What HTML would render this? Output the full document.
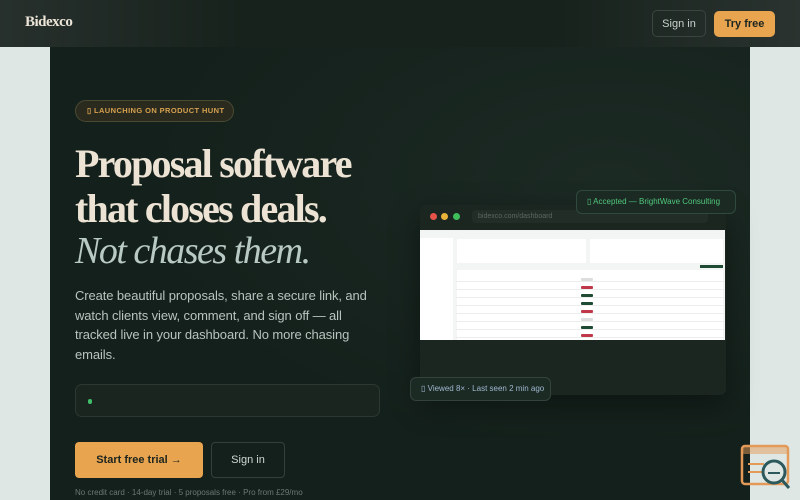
<!DOCTYPE html>
<html><head><meta charset="utf-8"><style>
*{margin:0;padding:0;box-sizing:border-box}
body{width:800px;height:500px;overflow:hidden;background:#dfe7e5;font-family:"Liberation Sans",sans-serif;position:relative}
.hdr{position:absolute;left:0;top:0;width:800px;height:47px;background:linear-gradient(90deg,#27302c,#18221d 30%,#18221d 70%,#2a332f);}
.logo{position:absolute;left:25px;top:14px;font-family:"Liberation Serif",serif;font-weight:bold;color:#ece5d8;font-size:15px;letter-spacing:-0.5px}
.hs{position:absolute;left:652px;top:10px;width:54px;height:27px;border:1px solid #3a4540;border-radius:5px;color:#c9d2cc;font-size:11px;text-align:center;line-height:26px}
.ht{position:absolute;left:714px;top:11px;width:61px;height:26px;background:#e8a44e;border-radius:5px;color:#1c2520;font-size:11px;font-weight:bold;text-align:center;line-height:26px}
.main{position:absolute;left:50px;top:47px;width:700px;height:453px;background:radial-gradient(ellipse at 80% 30%,#1c2a24,#14201b 60%)}
.pill{position:absolute;left:75px;top:100px;width:159px;height:22px;border:1px solid #4a4a32;background:#2a2a1e;border-radius:11px;color:#d6a14f;font-size:7.5px;letter-spacing:.4px;line-height:20px;padding-left:11px;font-weight:bold;white-space:nowrap}
h1{position:absolute;left:75px;top:141px;font-family:"Liberation Serif",serif;font-weight:bold;color:#ece3d4;font-size:40px;line-height:45px;letter-spacing:-1.8px}
.it{position:absolute;left:75px;top:229px;font-family:"Liberation Serif",serif;font-style:italic;color:#b9c9c4;font-size:38px;letter-spacing:-1.5px}
.p{position:absolute;left:75px;top:286px;width:300px;color:#b8c3be;font-size:13px;line-height:19.5px;letter-spacing:-0.1px}
.inp{position:absolute;left:75px;top:384px;width:305px;height:33px;border:1px solid #2c3833;background:#1a2520;border-radius:7px}
.inp i{position:absolute;left:12px;top:14px;width:4px;height:5px;background:#3fbf6a;border-radius:2px}
.b1{position:absolute;left:75px;top:442px;width:128px;height:36px;background:#e8a44e;border-radius:4px;color:#1c2520;font-size:11px;font-weight:bold;text-align:center;line-height:36px}
.b2{position:absolute;left:211px;top:442px;width:74px;height:36px;border:1px solid #34403a;border-radius:4px;color:#d0d8d3;font-size:11px;text-align:center;line-height:34px}
.note{position:absolute;left:75px;top:488px;color:#6c7872;font-size:8px}
.win{position:absolute;left:420px;top:205px;width:306px;height:190px;background:#1b2621;border-radius:6px;box-shadow:0 10px 30px rgba(0,0,0,.4)}
.dot{position:absolute;top:8px;width:7px;height:7px;border-radius:50%}
.url{position:absolute;left:52px;top:5px;width:236px;height:13px;background:#222d28;border-radius:4px;color:#5b6762;font-size:7px;padding-left:6px;line-height:13px}
.scr{position:absolute;left:0;top:25px;width:305px;height:110px;background:#f3f5f4}
.side{position:absolute;left:0;top:8px;width:33px;height:102px;background:#fff}
.card{position:absolute;background:#fff;border-radius:1px}
.row{position:absolute;left:36px;width:268px;height:1px;background:#eceeed}
.tag{position:absolute;width:12px;height:3px;border-radius:1px}
.toast{position:absolute;border:1px solid #2f4a3c;background:#1c2a24;border-radius:6px;font-size:8px;white-space:nowrap}
</style></head><body>
<div class="hdr"></div>
<div class="logo">Bidexco</div>
<div class="hs">Sign in</div>
<div class="ht">Try free</div>
<div class="main"></div>
<div class="pill">▯ LAUNCHING ON PRODUCT HUNT</div>
<h1>Proposal software<br>that closes deals.</h1>
<div class="it">Not chases them.</div>
<div class="p">Create beautiful proposals, share a secure link, and watch clients view, comment, and sign off — all tracked live in your dashboard. No more chasing emails.</div>
<div class="inp"><i></i></div>
<div class="b1">Start free trial →</div>
<div class="b2">Sign in</div>
<div class="note">No credit card · 14-day trial · 5 proposals free · Pro from £29/mo</div>
<div class="win">
<div class="dot" style="left:10px;background:#e5534b"></div>
<div class="dot" style="left:21px;background:#e8b339"></div>
<div class="dot" style="left:33px;background:#3fbf5a"></div>
<div class="url">bidexco.com/dashboard</div>
<div class="scr">
<div class="side"></div>
<div class="card" style="left:37px;top:9px;width:129px;height:24px"></div>
<div class="card" style="left:170px;top:9px;width:133px;height:24px"></div>
<div class="card" style="left:37px;top:40px;width:266px;height:70px"></div>
<div style="position:absolute;left:280px;top:35px;width:23px;height:3px;background:#1f4a34"></div>
<div class="row" style="top:51px"></div><div class="row" style="top:59px"></div><div class="row" style="top:67px"></div><div class="row" style="top:75px"></div><div class="row" style="top:83px"></div><div class="row" style="top:91px"></div><div class="row" style="top:99px"></div><div class="row" style="top:107px"></div>
<div class="tag" style="left:161px;top:48px;background:#ddd"></div>
<div class="tag" style="left:161px;top:56px;background:#c0394a"></div>
<div class="tag" style="left:161px;top:64px;background:#1f4a34"></div>
<div class="tag" style="left:161px;top:72px;background:#1f4a34"></div>
<div class="tag" style="left:161px;top:80px;background:#c0394a"></div>
<div class="tag" style="left:161px;top:88px;background:#ddd"></div>
<div class="tag" style="left:161px;top:96px;background:#1f4a34"></div>
<div class="tag" style="left:161px;top:104px;background:#c0394a"></div>
</div>
</div>
<div class="toast" style="left:576px;top:190px;width:160px;height:24px;color:#4fc77a;line-height:22px;padding-left:10px">▯ Accepted — BrightWave Consulting</div>
<div class="toast" style="left:410px;top:377px;width:141px;height:24px;color:#9fb8d0;line-height:22px;padding-left:10px;border-color:#33433c">▯ Viewed 8× · Last seen 2 min ago</div>
<svg style="position:absolute;left:740px;top:444px" width="52" height="46" viewBox="0 0 52 46"><rect x="2" y="2" width="46" height="38" rx="3" fill="none" stroke="#e39a58" stroke-width="2.5"/><rect x="2" y="2" width="46" height="8" fill="#e39a58" opacity=".5"/><line x1="8" y1="20" x2="24" y2="20" stroke="#e39a58" stroke-width="2"/><line x1="8" y1="28" x2="22" y2="28" stroke="#e39a58" stroke-width="2"/><circle cx="34" cy="28" r="11" fill="none" stroke="#2c5a5c" stroke-width="3"/><line x1="28" y1="29" x2="40" y2="29" stroke="#2c5a5c" stroke-width="2"/><line x1="42" y1="36" x2="49" y2="44" stroke="#2c5a5c" stroke-width="3"/></svg>
</body></html>
